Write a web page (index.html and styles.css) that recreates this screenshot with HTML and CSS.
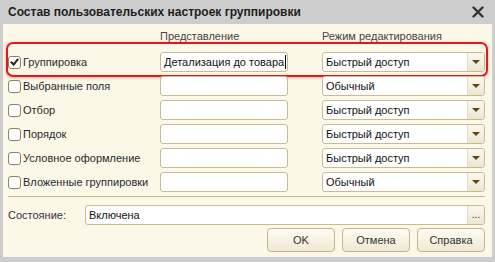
FILE: index.html
```html
<!DOCTYPE html>
<html lang="ru">
<head>
    <meta charset="UTF-8">
    <title>Состав пользовательских настроек группировки</title>
    <link rel="stylesheet" href="styles.css">
</head>
<body>

<div class="window">
    <div class="titlebar">
        <span class="title">Состав пользовательских настроек группировки</span>
        <svg class="close" width="12" height="12" viewBox="0 0 12 12">
            <path d="M1.5 1.5 L10.5 10.5 M10.5 1.5 L1.5 10.5" stroke="#333" stroke-width="2.4" stroke-linecap="round"/>
        </svg>
    </div>

    <div class="body">
        <div class="grid head">
            <span></span>
            <span class="col-title">Представление</span>
            <span class="col-title">Режим редактирования</span>
        </div>

        <div class="grid row selected">
            <label class="check"><span class="box checked"></span>Группировка</label>
            <div class="field"><span>Детализация до товара</span><span class="caret"></span></div>
            <div class="select"><span>Быстрый доступ</span><span class="drop"></span></div>
        </div>
        <div class="grid row">
            <label class="check"><span class="box"></span>Выбранные поля</label>
            <div class="field"></div>
            <div class="select"><span>Обычный</span><span class="drop"></span></div>
        </div>
        <div class="grid row">
            <label class="check"><span class="box"></span>Отбор</label>
            <div class="field"></div>
            <div class="select"><span>Быстрый доступ</span><span class="drop"></span></div>
        </div>
        <div class="grid row">
            <label class="check"><span class="box"></span>Порядок</label>
            <div class="field"></div>
            <div class="select"><span>Быстрый доступ</span><span class="drop"></span></div>
        </div>
        <div class="grid row">
            <label class="check"><span class="box"></span>Условное оформление</label>
            <div class="field"></div>
            <div class="select"><span>Быстрый доступ</span><span class="drop"></span></div>
        </div>
        <div class="grid row">
            <label class="check"><span class="box"></span>Вложенные группировки</label>
            <div class="field"></div>
            <div class="select"><span>Обычный</span><span class="drop"></span></div>
        </div>

        <div class="separator"></div>

        <div class="state">
            <span class="state-label">Состояние:</span>
            <div class="select wide"><span>Включена</span><span class="more">...</span></div>
        </div>

        <div class="buttons">
            <button class="btn">OK</button>
            <button class="btn">Отмена</button>
            <button class="btn">Справка</button>
        </div>
    </div>
</div>

</body>
</html>
```

FILE: styles.css
```css
body {
    margin: 0;
    padding: 0;
    font-family: "Liberation Sans", Arial, sans-serif;
    font-size: 11px;
    color: #2a2a2a;
}
.window {
    width: 495px;
    height: 262px;
    background-color: #cdcdcd;
    display: flex;
    flex-direction: column;
}
.titlebar {
    height: 24px;
    display: flex;
    align-items: center;
    justify-content: space-between;
    padding: 0 11px 0 8px;
}
.title {
    font-weight: bold;
    font-size: 12px;
    color: #1e1e1e;
}
.body {
    margin: 0 3px 5px 3px;
    flex: 1;
    background-color: #fbf8e8;
    padding: 4px 7px 0 5px;
}
.grid {
    display: grid;
    grid-template-columns: 152px 162px 163px;
    align-items: center;
}
.head {
    height: 16px;
    margin-bottom: 8px;
}
.col-title {
    color: #444;
}
.row {
    height: 20px;
    margin-bottom: 4px;
    position: relative;
}
.row.selected::after {
    content: "";
    position: absolute;
    left: -2px;
    right: -3px;
    top: -10px;
    bottom: -5px;
    border: 2px solid #e8141e;
    border-radius: 7px;
    box-shadow: 0 1px 3px rgba(120, 40, 40, 0.35);
}
.check {
    display: flex;
    align-items: center;
    gap: 2px;
    white-space: nowrap;
}
.box {
    width: 11px;
    height: 11px;
    border: 1px solid #8c8266;
    border-radius: 3px;
    background-color: #fff;
    position: relative;
}
.box.checked::after {
    content: "";
    position: absolute;
    left: 3px;
    top: 0px;
    width: 3px;
    height: 6px;
    border: solid #222;
    border-width: 0 2px 2px 0;
    transform: rotate(40deg);
}
.field, .select {
    height: 18px;
    border: 1px solid #c8bb90;
    border-radius: 3px;
    background-color: #fff;
    display: flex;
    align-items: center;
    box-sizing: content-box;
    white-space: nowrap;
}
.field {
    width: 123px;
    padding-left: 3px;
    color: #111;
}
.select {
    width: 158px;
    padding-left: 3px;
    justify-content: space-between;
    color: #111;
}
.caret {
    width: 1px;
    height: 14px;
    background-color: #000;
    margin-left: 1px;
}
.drop, .more {
    width: 16px;
    height: 18px;
    border-left: 1px solid #e2dac0;
    background: linear-gradient(#fbf8ee, #ece6d0);
    border-radius: 0 2px 2px 0;
    display: flex;
    align-items: center;
    justify-content: center;
}
.drop::after {
    content: "";
    border-left: 4px solid transparent;
    border-right: 4px solid transparent;
    border-top: 4px solid #5a4a14;
}
.more {
    font-size: 10px;
    color: #333;
    line-height: 10px;
    align-items: flex-end;
    padding-bottom: 4px;
    height: 14px;
}
.separator {
    height: 1px;
    background-color: #c6b98e;
    margin: 1px 0 8px 0;
}
.state {
    display: flex;
    align-items: center;
    height: 20px;
}
.state-label {
    width: 77px;
    color: #333;
}
.select.wide {
    width: 395px;
}
.buttons {
    display: flex;
    justify-content: flex-end;
    gap: 7px;
    margin-top: 3px;
}
.btn {
    font-family: "Liberation Sans", Arial, sans-serif;
    font-size: 11px;
    color: #333;
    height: 24px;
    width: 68px;
    border: 1px solid #c3b48a;
    border-radius: 4px;
    background: linear-gradient(#fdfbf2, #efe9d4);
    padding: 0;
}
```
